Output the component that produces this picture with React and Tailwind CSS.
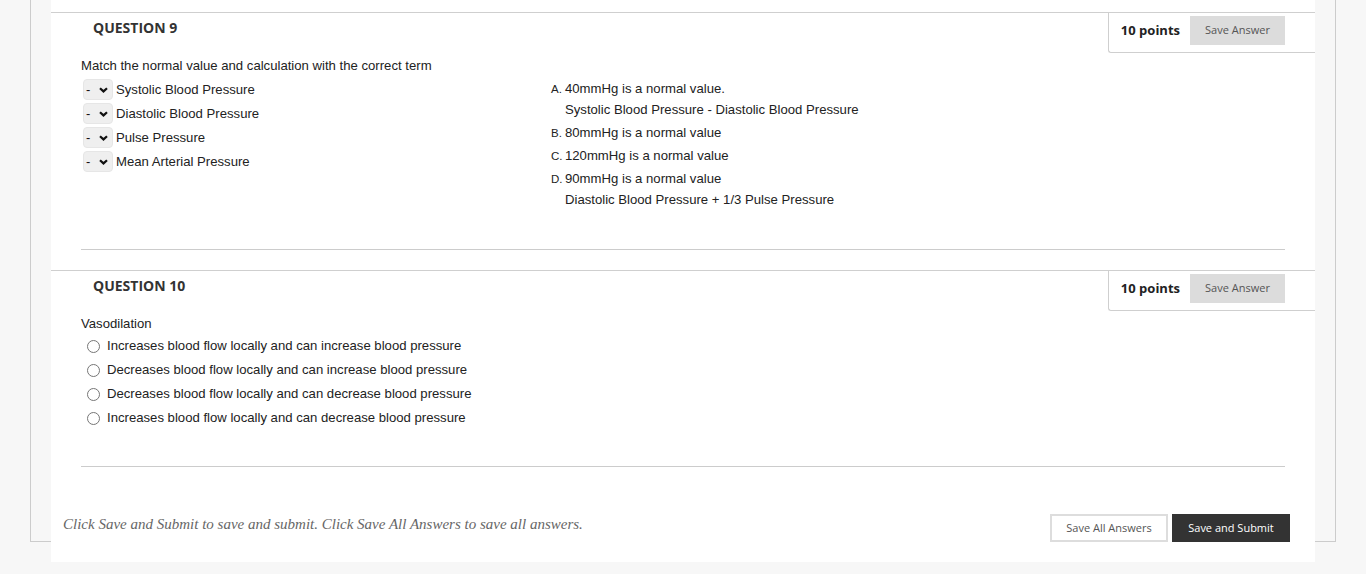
import React from "react";

const sans = { fontFamily: '"Liberation Sans", Arial, sans-serif' };
const open = { fontFamily: '"Open Sans", "Noto Sans", sans-serif' };

function Chevron() {
  return (
    <svg width="9" height="6" viewBox="0 0 9 6" className="block">
      <path d="M1 1.2 L4.5 4.4 L8 1.2" fill="none" stroke="#111" strokeWidth="2.2" />
    </svg>
  );
}

function Select() {
  return (
    <div className="ml-[2px] w-[30px] h-[21px] rounded-[4px] bg-[#efefef] border border-[#e6e6e6] flex items-center justify-between pl-[2px] pr-[4px] text-[13px] text-[#111] shrink-0">
      <span className="leading-none">-</span>
      <Chevron />
    </div>
  );
}

function Header({ title }) {
  return (
    <div className="flex justify-between items-start">
      <h3
        className="pl-[42px] pt-[5px] text-[14px] leading-[20px] font-bold text-[#333] uppercase"
        style={open}
      >
        {title}
      </h3>
      <div
        className="h-[40px] border-l border-b border-[#cfcfcf] rounded-bl-[3px] flex items-start pt-[3px] pl-[12px] pr-[30px] gap-[10px] bg-white"
        style={open}
      >
        <span className="h-[29px] flex items-center text-[13px] font-bold text-[#222]">
          10 points
        </span>
        <button className="h-[29px] w-[95px] bg-[#dcdcdc] text-[11px] text-[#555] flex items-center justify-center">
          Save Answer
        </button>
      </div>
    </div>
  );
}

function Line({ l, children }) {
  return (
    <div className="h-[21px] flex items-baseline whitespace-nowrap">
      <span className="w-[14px] text-[11.5px] leading-[21px] text-[#222] shrink-0">{l}</span>
      <span className="leading-[21px]">{children}</span>
    </div>
  );
}

export default function App() {
  const left = [
    "Systolic Blood Pressure",
    "Diastolic Blood Pressure",
    "Pulse Pressure",
    "Mean Arterial Pressure",
  ];
  const radios = [
    "Increases blood flow locally and can increase blood pressure",
    "Decreases blood flow locally and can increase blood pressure",
    "Decreases blood flow locally and can decrease blood pressure",
    "Increases blood flow locally and can decrease blood pressure",
  ];
  return (
    <div className="h-[574px] bg-[#f7f7f7] px-[30px] overflow-hidden">
      <div className="h-[542px] border-l border-r border-b border-[#cccccc] px-[20px]">
        <div className="bg-white pt-[12px] pb-[20px]">
          {/* Question 9 */}
          <div className="border-t border-[#cfcfcf]">
            <Header title="Question 9" />
            <div className="px-[30px] text-[#222]" style={sans}>
              <p className="mt-[3px] text-[13.15px] leading-[20px]">
                Match the normal value and calculation with the correct term
              </p>
              <div className="mt-[3px] flex">
                <div className="w-[470px] flex flex-col gap-[3px]">
                  {left.map((t) => (
                    <div key={t} className="flex items-center h-[21px]">
                      <Select />
                      <span className="ml-[3px] text-[13.15px] leading-[21px]">{t}</span>
                    </div>
                  ))}
                </div>
                <div className="-mt-[1px] flex flex-col gap-[2px] text-[13.15px]">
                  <div>
                    <Line l="A.">40mmHg is a normal value.</Line>
                    <Line l="">Systolic Blood Pressure - Diastolic Blood Pressure</Line>
                  </div>
                  <Line l="B.">80mmHg is a normal value</Line>
                  <Line l="C.">120mmHg is a normal value</Line>
                  <div>
                    <Line l="D.">90mmHg is a normal value</Line>
                    <Line l="">Diastolic Blood Pressure + 1/3 Pulse Pressure</Line>
                  </div>
                </div>
              </div>
              <div className="mt-[39px] h-px bg-[#cccccc]" />
            </div>
          </div>

          {/* Question 10 */}
          <div className="mt-[20px] border-t border-[#cfcfcf]">
            <Header title="Question 10" />
            <div className="px-[30px] text-[#222]" style={sans}>
              <p className="mt-[3px] text-[13.15px] leading-[20px]">Vasodilation</p>
              <div className="flex flex-col">
                {radios.map((t) => (
                  <div key={t} className="flex items-center h-[24px]">
                    <span className="ml-[6px] w-[13px] h-[13px] rounded-full border border-[#767676] bg-white shrink-0" />
                    <span className="ml-[7px] text-[13.15px] leading-[24px]">{t}</span>
                  </div>
                ))}
              </div>
              <div className="mt-[36px] h-px bg-[#cccccc]" />
            </div>
          </div>

          {/* Footer */}
          <div className="mt-[47px] flex justify-between items-start pl-[12px] pr-[25px]">
            <p
              className="italic text-[15px] leading-[20px] text-[#666]"
              style={{ fontFamily: 'Georgia, "Liberation Serif", serif' }}
            >
              Click Save and Submit to save and submit. Click Save All Answers to save all answers.
            </p>
            <div className="flex gap-[4px]" style={open}>
              <button className="h-[28px] w-[118px] border-2 border-[#dddddd] bg-white text-[11px] text-[#555] flex items-center justify-center">
                Save All Answers
              </button>
              <button className="h-[28px] w-[118px] bg-[#333333] text-[11px] text-white flex items-center justify-center">
                Save and Submit
              </button>
            </div>
          </div>
        </div>
      </div>
    </div>
  );
}
